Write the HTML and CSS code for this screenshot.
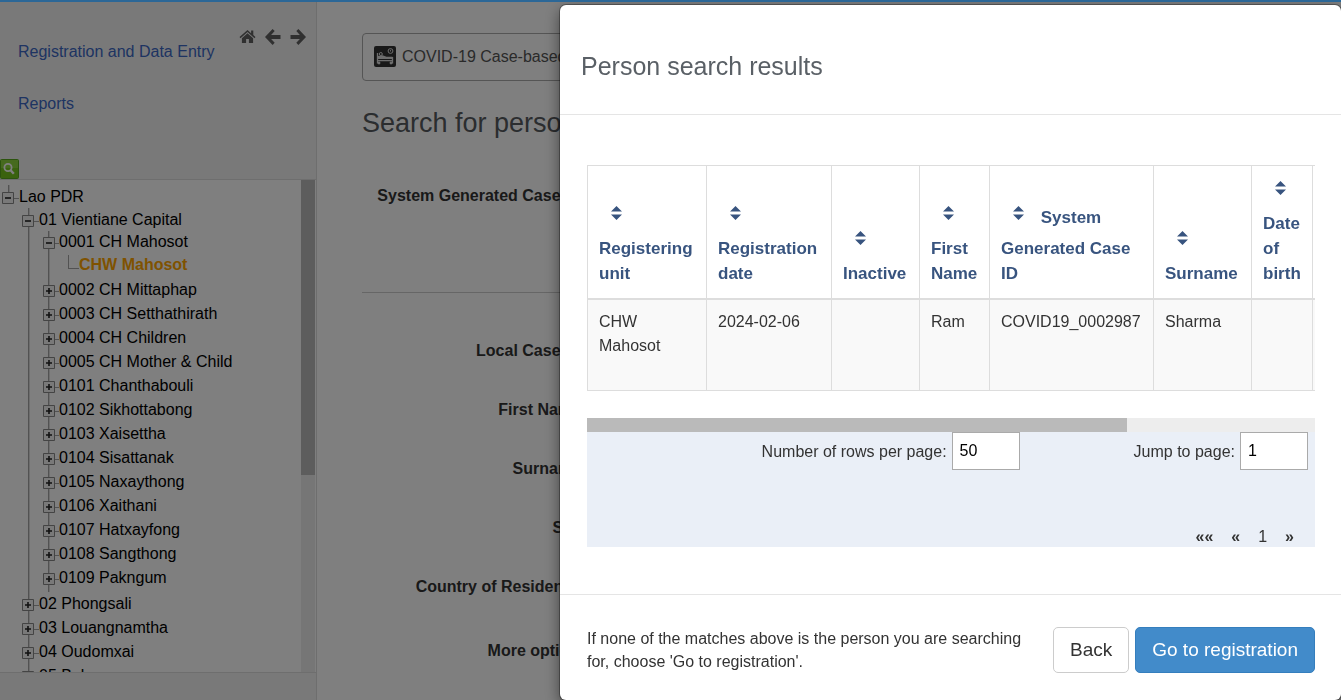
FILE: index.html
```html
<!DOCTYPE html>
<html lang="en">
<head>
<meta charset="utf-8">
<title>Person search results</title>
<link rel="stylesheet" href="styles.css">
</head>
<body>
<svg class="defs" aria-hidden="true">
  <symbol id="sort" viewBox="0 0 11 14"><path d="M5.500 0 11 5.500H0zM0 8.500H11L5.500 14z" fill="currentColor"/></symbol>
  <symbol id="plus" viewBox="0 0 12 12"><path d="M.5.5h11v11H.5z" fill="#f2f2f2" stroke="#888"/><path d="M3 6h6M6 3v6" stroke="#222" stroke-width="1.600"/></symbol>
  <symbol id="minus" viewBox="0 0 12 12"><path d="M.5.5h11v11H.5z" fill="#f2f2f2" stroke="#888"/><path d="M3 6h6" stroke="#222" stroke-width="1.600"/></symbol>
</svg>
<header class="topbar"></header>
<div class="page">
  <aside class="sidebar">
    <div class="sidebar-head">
      <nav class="links">
        <a href="#">Registration and Data Entry</a>
        <a href="#">Reports</a>
      </nav>
      <div class="nav-icons">
        <svg width="17" height="16" viewBox="0 0 17 16"><path d="M8.500 1 .5 8.100l1 1.100 7-6.200 7 6.200 1-1.100-2.200-2V1.500h-2.200v2.700z"/><path d="m8.500 4.300-5.600 5V14h4.200v-4h2.800v4h4.200V9.300z"/></svg>
        <svg width="16" height="16" viewBox="0 0 16 16"><path d="M7.600 0 9.700 2.100 6.100 5.900H15.500V9.900H6.100L9.700 13.700 7.600 15.900 0 7.900z"/></svg>
        <svg width="16" height="16" viewBox="0 0 16 16"><path d="M8.400 0 6.300 2.100 9.900 5.900H.5V9.900H9.900L6.300 13.700 8.400 15.900 16 7.900z"/></svg>
      </div>
    </div>
    <button class="search-btn" aria-label="Search">
      <svg width="19" height="20" viewBox="0 0 19 20"><rect x=".5" y=".5" width="18" height="19" rx="1" fill="#74c41c" stroke="#58a81c"/><path d="M1 1h17v8H1z" fill="#8cd43c"/><circle cx="8" cy="8.500" r="3.600" fill="none" stroke="#fff" stroke-width="1.800"/><path d="m10.600 11.200 3.200 3.600" stroke="#fff" stroke-width="2.400"/></svg>
    </button>
    <div class="tree-panel">
      <ul class="tree root">
        <li><div class="row"><svg class="toggle"><use href="#minus"/></svg><span class="stem"></span><span>Lao PDR</span></div>
          <ul class="tree">
            <li><div class="row"><svg class="toggle"><use href="#minus"/></svg><span class="stem"></span><span>01 Vientiane Capital</span></div>
              <ul class="tree units">
                <li class="open"><div class="row"><svg class="toggle"><use href="#minus"/></svg><span class="stem"></span><span>0001 CH Mahosot</span></div>
                  <ul class="tree leaf">
                    <li><div class="row"><span class="elbow"></span><span class="selected">CHW Mahosot</span></div></li>
                  </ul>
                </li>
                <li><div class="row"><svg class="toggle"><use href="#plus"/></svg><span class="stem"></span><span>0002 CH Mittaphap</span></div></li>
                <li><div class="row"><svg class="toggle"><use href="#plus"/></svg><span class="stem"></span><span>0003 CH Setthathirath</span></div></li>
                <li><div class="row"><svg class="toggle"><use href="#plus"/></svg><span class="stem"></span><span>0004 CH Children</span></div></li>
                <li><div class="row"><svg class="toggle"><use href="#plus"/></svg><span class="stem"></span><span>0005 CH Mother &amp; Child</span></div></li>
                <li><div class="row"><svg class="toggle"><use href="#plus"/></svg><span class="stem"></span><span>0101 Chanthabouli</span></div></li>
                <li><div class="row"><svg class="toggle"><use href="#plus"/></svg><span class="stem"></span><span>0102 Sikhottabong</span></div></li>
                <li><div class="row"><svg class="toggle"><use href="#plus"/></svg><span class="stem"></span><span>0103 Xaisettha</span></div></li>
                <li><div class="row"><svg class="toggle"><use href="#plus"/></svg><span class="stem"></span><span>0104 Sisattanak</span></div></li>
                <li><div class="row"><svg class="toggle"><use href="#plus"/></svg><span class="stem"></span><span>0105 Naxaythong</span></div></li>
                <li><div class="row"><svg class="toggle"><use href="#plus"/></svg><span class="stem"></span><span>0106 Xaithani</span></div></li>
                <li><div class="row"><svg class="toggle"><use href="#plus"/></svg><span class="stem"></span><span>0107 Hatxayfong</span></div></li>
                <li><div class="row"><svg class="toggle"><use href="#plus"/></svg><span class="stem"></span><span>0108 Sangthong</span></div></li>
                <li><div class="row"><svg class="toggle"><use href="#plus"/></svg><span class="stem"></span><span>0109 Pakngum</span></div></li>
              </ul>
            </li>
            <li><div class="row"><svg class="toggle"><use href="#plus"/></svg><span class="stem"></span><span>02 Phongsali</span></div></li>
            <li><div class="row"><svg class="toggle"><use href="#plus"/></svg><span class="stem"></span><span>03 Louangnamtha</span></div></li>
            <li><div class="row"><svg class="toggle"><use href="#plus"/></svg><span class="stem"></span><span>04 Oudomxai</span></div></li>
            <li><div class="row"><svg class="toggle"><use href="#plus"/></svg><span class="stem"></span><span>05 Bokeo</span></div></li>
          </ul>
        </li>
      </ul>
      <div class="v-track"><div class="v-thumb"></div></div>
    </div>
  </aside>
  <main class="main">
    <button class="program">
      <svg width="22" height="22" viewBox="0 0 22 22"><rect width="22" height="21" rx="2" fill="#333"/><g fill="none" stroke="#ddd"><path d="M3.500 7v10.500" stroke-width="1.300"/><path d="M3 14.700h16M18.500 11v6.500" stroke-width="1.300"/><circle cx="16.500" cy="5" r="2.400"/><path d="M16.500 3.800V5.500" stroke-width=".9"/><circle cx="6.800" cy="8" r="1.500"/></g><path d="M4 11.500V10l4.500-.8 4 1.600H18.500V13H4z" fill="#ddd"/><circle cx="5" cy="17" r="1.400" fill="#ddd"/><circle cx="17" cy="17" r="1.400" fill="#ddd"/></svg>
      <span>COVID-19 Case-based Surveillance</span>
    </button>
    <h1 class="search-title">Search for person</h1>
    <div class="fields first"><div class="field">System Generated Case ID</div></div>
    <div class="fields">
      <div class="field">Local Case ID</div>
      <div class="field">First Name</div>
      <div class="field">Surname</div>
      <div class="field">Sex</div>
      <div class="field">Country of Residence</div>
      <div class="field more">More options</div>
    </div>
  </main>
</div>
<div class="backdrop"></div>
<section class="modal" role="dialog" aria-labelledby="modal-title">
  <div class="modal-head"><h2 id="modal-title">Person search results</h2></div>
  <div class="modal-body">
    <div class="table-wrap">
      <table class="results">
        <colgroup><col class="c-unit"><col class="c-date"><col class="c-inactive"><col class="c-first"><col class="c-id"><col class="c-surname"><col class="c-birth"><col class="c-rest"></colgroup>
        <thead><tr>
          <th><svg class="sort"><use href="#sort"/></svg> Registering unit</th>
          <th><svg class="sort"><use href="#sort"/></svg> Registration date</th>
          <th><svg class="sort"><use href="#sort"/></svg> Inactive</th>
          <th><svg class="sort"><use href="#sort"/></svg> First Name</th>
          <th><svg class="sort"><use href="#sort"/></svg> System Generated Case ID</th>
          <th><svg class="sort"><use href="#sort"/></svg> Surname</th>
          <th><svg class="sort"><use href="#sort"/></svg> Date of birth</th>
          <th></th>
        </tr></thead>
        <tbody><tr><td>CHW Mahosot</td><td>2024-02-06</td><td></td><td>Ram</td><td>COVID19_0002987</td><td>Sharma</td><td></td><td></td></tr></tbody>
      </table>
    </div>
    <div class="h-track"><div class="h-thumb"></div></div>
    <div class="pager">
      <div class="pager-fields">
        <label for="rows">Number of rows per page:</label><input id="rows" type="text" value="50">
        <label class="jump" for="jump">Jump to page:</label><input id="jump" type="text" value="1">
      </div>
      <div class="pages"><a href="#"><b>««</b></a><a href="#"><b>«</b></a><span>1</span><a href="#"><b>»</b></a></div>
    </div>
  </div>
  <div class="modal-foot">
    <p>If none of the matches above is the person you are searching for, choose 'Go to registration'.</p>
    <div class="actions">
      <button class="btn">Back</button>
      <button class="btn primary">Go to registration</button>
    </div>
  </div>
</section>
</body>
</html>
```

FILE: styles.css
```css
* { box-sizing: border-box; }
body {
  margin: 0;
  height: 100vh;
  overflow: hidden;
  background: #fff;
  color: #333;
  font: 16px/24px "Liberation Sans", Arial, sans-serif;
}
button, input { font: inherit; color: inherit; }
a { color: inherit; text-decoration: none; }
.defs { position: absolute; width: 0; height: 0; }

.topbar { position: fixed; z-index: 3; top: 0; left: 0; right: 0; height: 2px; background: #2b6797; }
.page { display: flex; height: 100vh; padding-top: 2px; }

/* Sidebar */
.sidebar {
  display: flex;
  flex-direction: column;
  flex: none;
  width: 317px;
  padding-bottom: 27px;
  background: #f3f3f3;
  border-right: 1px solid #ddd;
}
.sidebar-head { display: flex; justify-content: space-between; height: 156px; padding: 27px 10px 0 18px; }
.links { display: flex; flex-direction: column; gap: 28px; padding-top: 11px; color: #3c68c4; white-space: nowrap; }
.nav-icons { display: flex; gap: 9px; fill: #606060; }
.search-btn { display: block; align-self: flex-start; height: 21px; padding: 0; border: 0; background: none; }
.search-btn svg { display: block; }
.tree-panel {
  display: flex;
  flex: 1;
  min-height: 0;
  background: #fff;
  border-top: 1px solid #ddd;
  border-bottom: 1px solid #ddd;
  overflow: hidden;
  color: #000;
}
.root { flex: 1; padding-top: 5px; }
.v-track { width: 14px; margin-right: 1px; background: #ededed; }
.v-thumb { height: 60%; background: #bababa; }

.tree {
  margin: 0;
  padding-left: 0;
  list-style: none;
  background: linear-gradient(90deg, #a4a4a4 1px, #dadada 1px) 8px 0 / 2px 100% no-repeat;
}
.tree .tree { margin-left: 20px; }
.root { background-position: 8px 5px; background-size: 2px 8px; }
.leaf { background-image: none; }
.units { padding-bottom: 2px; }
.row { display: flex; align-items: center; height: 24px; padding-left: 2px; white-space: nowrap; }
.root > li > .row, .root > li > .tree > li:first-child > .row, .leaf .row { height: 23px; }
.open > .row { height: 22px; }
.open { padding-bottom: 2px; }
.toggle { width: 12px; height: 12px; flex: none; margin-top: 2px; }
.stem { width: 5px; height: 1px; margin-top: 3px; background: #a4a4a4; }
.units .toggle { margin-left: 1px; }
.units .stem { width: 4px; }
.elbow { width: 11px; height: 14px; margin: 0 0 6px 6px; border: solid #a4a4a4; border-width: 0 0 1px 1px; }
.selected { color: orange; font-weight: bold; }

/* Search form */
.main { flex: 1; min-width: 0; padding: 31px 20px 0 45px; }
.program {
  display: flex;
  align-items: center;
  gap: 6px;
  width: 100%;
  height: 48px;
  padding: 0 11px;
  background: #fff;
  border: 1px solid #aaa;
  border-radius: 4px;
  color: #555;
}
.search-title { margin: 26px 0 0; color: #565a5e; font-size: 27px; line-height: 32px; font-weight: normal; }
.field { width: 219px; height: 59px; line-height: 59px; text-align: right; font-weight: bold; white-space: nowrap; }
.fields { padding-top: 28px; }
.first { padding: 27px 0 67px; border-bottom: 1px solid #ccc; }
.more { width: 226px; margin-top: 5px; }

.backdrop { position: fixed; z-index: 1; inset: 0; background: rgba(0, 0, 0, .5); }

/* Dialog */
.modal {
  position: fixed;
  z-index: 2;
  top: 5px;
  right: 0;
  width: 781px;
  max-width: 100%;
  background: #fff;
  border-radius: 6px;
  box-shadow: 0 0 0 1px rgba(0, 0, 0, .3), 0 5px 15px rgba(0, 0, 0, .5);
}
.modal-head { padding: 45px 21px 32px; border-bottom: 1px solid #e5e5e5; }
.modal-head h2 { margin: 0; color: #5a6066; font-size: 25px; line-height: 32px; font-weight: normal; }
.modal-body { padding: 50px 26px 47px 27px; }
.table-wrap { overflow: hidden; }
.results { width: 827px; table-layout: fixed; border-collapse: collapse; }
.c-unit { width: 119px; }
.c-date { width: 125px; }
.c-inactive { width: 88px; }
.c-first { width: 70px; }
.c-id { width: 164px; }
.c-surname { width: 98px; }
.c-birth { width: 61px; }
.results th, .results td { border: 1px solid #ddd; text-align: left; }
.results th {
  padding: 10px 8px 12px 11px;
  border-bottom-width: 2px;
  color: #38547f;
  font-size: 17px;
  line-height: 25px;
  vertical-align: bottom;
}
.results td { height: 91px; padding: 10px 8px 10px 11px; background: #f9f9f9; vertical-align: top; }
.sort { width: 11px; height: 14px; margin: 5px 12px 16px; vertical-align: -13px; }
.h-track { margin-top: 27px; background: #ededed; }
.h-thumb { width: 540px; height: 14px; background: #bababa; }
.pager { background: #eaeff7; }
.pager-fields { display: flex; justify-content: flex-end; align-items: center; gap: 5px; padding-right: 7px; }
.pager-fields label { padding-top: 2px; }
.pager-fields input { width: 68px; height: 38px; padding: 0 7px; border: 1px solid #aaa; background: #fff; color: #000; }
.jump { margin-left: 109px; }
.pages { display: flex; justify-content: flex-end; gap: 18px; padding: 56px 21px 0 0; line-height: 21px; }

.modal-foot { display: flex; justify-content: space-between; padding: 32px 26px 27px 27px; border-top: 1px solid #e5e5e5; }
.modal-foot p { flex: 1; max-width: 445px; margin: 0; line-height: 23px; }
.actions { display: flex; gap: 6px; }
.btn {
  height: 46px;
  padding: 0 16px;
  border: 1px solid #ccc;
  border-radius: 5px;
  background: #fff;
  font-size: 19px;
}
.primary { background: #428bca; border-color: #357ebd; color: #fff; }
```
